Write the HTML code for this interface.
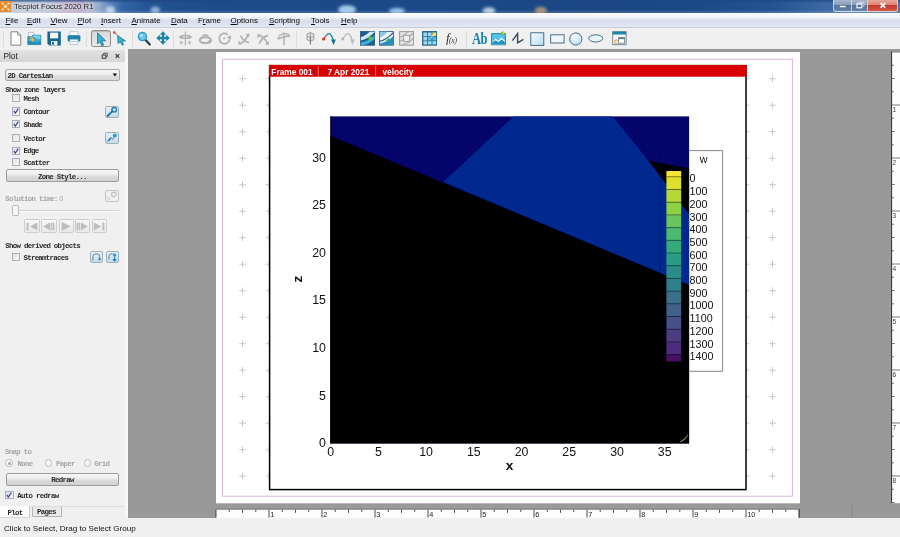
<!DOCTYPE html>
<html lang="en"><head><meta charset="utf-8"><title>Tecplot Focus 2020 R1</title>
<style>
html,body{margin:0;padding:0;}
body{width:900px;height:537px;overflow:hidden;position:relative;background:#f0f0f0;font-family:"Liberation Sans",sans-serif;}
#root{position:absolute;left:0;top:0;width:900px;height:537px;overflow:hidden;will-change:transform;}
.abs{position:absolute;}
#title{left:0;top:0;width:900px;height:13.2px;background:linear-gradient(90deg,#c3ccdc 0px,#bdc6d9 50px,#c2b4cf 68px,#bfa9c8 78px,#b3b9d3 90px,#94add0 99px,#5f87bd 109px,#3465a6 122px,#215291 150px,#1c4b89 220px,#1b4a88 420px,#1a4783 600px,#1b4a87 700px,#225291 770px,#38669f 820px,#4872a8 860px,#4872a8 900px);}
#titleshade{left:0;top:0;width:900px;height:13.2px;background:linear-gradient(180deg,rgba(30,70,130,.75) 0,rgba(30,70,130,.55) 1.2px,rgba(40,80,140,.0) 2.8px,rgba(255,255,255,0) 75%,rgba(255,255,255,.18) 100%);}
#titletxt{left:14.2px;top:0.2px;font-size:7.75px;line-height:13px;color:#1a1a1a;white-space:nowrap;text-shadow:0 0 3px rgba(255,255,255,.9),0 0 5px rgba(255,255,255,.7);}
#menu{left:0;top:13px;width:900px;height:14.5px;background:linear-gradient(180deg,#fcfcfe 0,#f2f4fa 30%,#d9dfee 50%,#dae0ee 68%,#e3e8f3 100%);border-bottom:1px solid #c9cdd9;box-sizing:border-box;}
.mi{position:absolute;top:15.4px;font-size:7.95px;line-height:11px;color:#0a0a0a;white-space:nowrap;}
.mi u{text-decoration:underline;text-underline-offset:1px;}
#toolbar{left:0;top:27.5px;width:900px;height:21.5px;background:#f0f0f0;}
#left{left:0;top:49px;width:125px;height:469px;background:#f0f0f0;}
#work{left:127.6px;top:49px;width:772.4px;height:469px;background:#999999;}
#status{left:0;top:518px;width:900px;height:19px;background:#f0f0f0;}
#statustxt{left:4px;top:524.3px;font-size:8.1px;line-height:10px;color:#111;white-space:nowrap;}
.mono{font-family:"Liberation Mono",monospace;font-weight:bold;font-size:7.4px;letter-spacing:-0.69px;line-height:9px;color:#2a2a2a;white-space:nowrap;position:absolute;}
.dis{color:#a6a6a6;}
.cb{position:absolute;width:7px;height:7px;border:1px solid #adafb6;background:linear-gradient(135deg,#dfe1ea,#f8f8fb);box-sizing:border-box;}
.btn{position:absolute;border:1px solid #9c9c9c;border-radius:2px;background:linear-gradient(180deg,#f6f6f6 0,#ececec 48%,#dcdcdc 52%,#d2d2d2 100%);box-sizing:border-box;}
.ibtn{position:absolute;width:13px;height:13px;border:1px solid #9fb0bd;border-radius:2px;background:linear-gradient(180deg,#e6f0f7,#c6dcea);box-sizing:border-box;}
</style></head>
<body>
<div id="root">
<div id="title" class="abs"></div><div id="titleshade" class="abs"></div>
<svg class="abs" style="left:0;top:0" width="900" height="13.2" viewBox="0 0 900 13.2"><defs><filter id="bl" x="-30%" y="-60%" width="160%" height="220%"><feGaussianBlur stdDeviation="1.6"/></filter></defs><g filter="url(#bl)"><ellipse cx="110" cy="10" rx="5" ry="4" fill="#cfe0f4" opacity=".8"/><ellipse cx="155" cy="10" rx="5" ry="3.6" fill="#bcd6f2" opacity=".7"/><ellipse cx="347" cy="9.6" rx="9" ry="4.4" fill="#b4d8f6" opacity=".9"/><ellipse cx="397" cy="11" rx="8" ry="3" fill="#a8d0f6" opacity=".9"/><ellipse cx="489" cy="10.6" rx="6.5" ry="3.4" fill="#cfe2f6" opacity=".85"/><ellipse cx="541" cy="10.4" rx="6" ry="3.6" fill="#c9a27a" opacity=".8"/></g></svg>
<svg class="abs" style="left:0;top:0" width="12" height="13" viewBox="0 0 12 13"><rect x="0" y="1" width="11" height="11" fill="#e88a2e"/><circle cx="5.5" cy="6.5" r="1.6" fill="#fbe3b8"/><circle cx="2.5" cy="3.5" r="1.1" fill="#fbe3b8"/><circle cx="8.6" cy="3.5" r="1.1" fill="#fbe3b8"/><circle cx="2.5" cy="9.5" r="1.1" fill="#fbe3b8"/><circle cx="8.6" cy="9.5" r="1.1" fill="#fbe3b8"/><path d="M2.5 3.5L8.6 9.5M8.6 3.5L2.5 9.5" stroke="#fbe3b8" stroke-width=".7"/></svg>
<div id="titletxt" class="abs">Tecplot Focus 2020 R1</div>
<div class="abs" style="left:833px;top:0;width:19px;height:11.5px;border:1px solid rgba(220,230,245,.75);border-top:none;border-radius:0 0 0 3px;box-sizing:border-box;background:linear-gradient(180deg,#a6b5cb 0,#8a9dba 45%,#57739d 50%,#6582ab 100%);"></div>
<div class="abs" style="left:851px;top:0;width:17px;height:11.5px;border:1px solid rgba(220,230,245,.75);border-top:none;box-sizing:border-box;background:linear-gradient(180deg,#a6b5cb 0,#8a9dba 45%,#57739d 50%,#6582ab 100%);"></div>
<div class="abs" style="left:867px;top:0;width:31px;height:11.5px;border:1px solid rgba(235,215,215,.8);border-top:none;border-radius:0 0 3px 0;box-sizing:border-box;background:linear-gradient(180deg,#e7a79c 0,#dd8273 45%,#c4382a 50%,#d2594a 100%);"></div>
<svg class="abs" style="left:833px;top:0" width="66" height="12" viewBox="0 0 66 12"><rect x="6.5" y="5.6" width="6.5" height="1.9" fill="#fff" stroke="#48566b" stroke-width=".4"/><rect x="24" y="3.8" width="4.8" height="4" fill="none" stroke="#fff" stroke-width="1.1"/><path d="M26 3V2.2H31V6.3H29.6" fill="none" stroke="#e8eef6" stroke-width=".7"/><path d="M47.6 3.2L52.2 7.6M52.2 3.2L47.6 7.6" stroke="#fff" stroke-width="1.7"/></svg>
<div id="menu" class="abs"></div>
<div class="mi" style="left:5.5px"><u>F</u>ile</div><div class="mi" style="left:27px"><u>E</u>dit</div><div class="mi" style="left:50.5px"><u>V</u>iew</div><div class="mi" style="left:77.5px"><u>P</u>lot</div><div class="mi" style="left:101px"><u>I</u>nsert</div><div class="mi" style="left:131.5px"><u>A</u>nimate</div><div class="mi" style="left:171px"><u>D</u>ata</div><div class="mi" style="left:198px">F<u>r</u>ame</div><div class="mi" style="left:230.5px"><u>O</u>ptions</div><div class="mi" style="left:269px"><u>S</u>cripting</div><div class="mi" style="left:311px"><u>T</u>ools</div><div class="mi" style="left:341px"><u>H</u>elp</div>
<div id="toolbar" class="abs"></div>
<div class="abs" style="left:3.4px;top:30.5px;width:1px;height:16px;background:#dcdcdc"></div><div class="abs" style="left:86.0px;top:30.5px;width:1px;height:16px;background:#dcdcdc"></div><div class="abs" style="left:132.0px;top:30.5px;width:1px;height:16px;background:#dcdcdc"></div><div class="abs" style="left:173.2px;top:30.5px;width:1px;height:16px;background:#dcdcdc"></div><div class="abs" style="left:296.4px;top:30.5px;width:1px;height:16px;background:#dcdcdc"></div><div class="abs" style="left:466.4px;top:30.5px;width:1px;height:16px;background:#dcdcdc"></div>
<svg class="abs" style="left:10px;top:31px" width="12" height="15" viewBox="0 0 12 15"><path d="M1 .8H7.6L10.8 4V14.2H1Z" fill="#fdfdfd" stroke="#777" stroke-width=".9"/><path d="M7.6 .8V4H10.8" fill="#e4e4e4" stroke="#777" stroke-width=".8"/></svg>
<svg class="abs" style="left:27.4px;top:31.2px" width="15" height="15" viewBox="0 0 15 15"><path d="M1.6 1.4H6.6V7H1.6Z" fill="#f4f8fa" stroke="#8aa8b6" stroke-width=".6"/><path d="M.8 5.6H4.6L5.8 4.2H13.8V13.6H.8Z" fill="#3aa9cc" stroke="#1a7f9f" stroke-width=".7"/><path d="M6 4.6H13.4V8.4Q9 8 6 5.8Z" fill="#7fd0e6"/><path d="M.8 13.6V9.4Q7 13 13.8 10.4V13.6Z" fill="#1f8db3"/><path d="M3.4 5.2L6.4 8.6L4 8.6L6.6 10.6" fill="none" stroke="#f0b43a" stroke-width="1.3"/></svg>
<svg class="abs" style="left:47.2px;top:31.2px" width="15" height="15" viewBox="0 0 15 15"><path d="M.4 .6H13.8V14.4H2.4L.4 12.4Z" fill="#17668a"/><rect x="3" y="1.6" width="8.2" height="5.8" fill="#eef6fa"/><rect x="4" y="10" width="6.4" height="4.4" fill="#e4eef4"/><rect x="5" y="10.8" width="1.8" height="3" fill="#17668a"/></svg>
<svg class="abs" style="left:66.6px;top:31.4px" width="14" height="14" viewBox="0 0 14 14"><rect x="3" y=".8" width="8" height="4" fill="#fafafa" stroke="#8fb6c6" stroke-width=".6"/><rect x=".6" y="4.2" width="12.8" height="6.2" rx="1" fill="#1b84a8"/><rect x="3" y="8.4" width="8" height="5" fill="#f3f7f9" stroke="#8fb6c6" stroke-width=".6"/><rect x="3.8" y="10.2" width="6.4" height=".8" fill="#9fc4d2"/></svg>
<div class="abs" style="left:91.4px;top:30px;width:19.2px;height:17px;border:1px solid #8b8b8b;border-radius:2.5px;background:linear-gradient(180deg,#d9d9d9,#e9e9e9);box-sizing:border-box;box-shadow:inset 0 1px 1px rgba(0,0,0,.15)"></div>
<svg class="abs" style="left:95.5px;top:31.6px" width="11" height="15" viewBox="0 0 11 15"><path d="M1.6 .8L9.6 8.8H5.8L7.6 13L5.8 13.8L4 9.6L1.6 12Z" fill="#35b4d2" stroke="#10708f" stroke-width=".8"/></svg>
<svg class="abs" style="left:113.4px;top:31.2px" width="15" height="15" viewBox="0 0 15 15"><path d="M4.6 4.4L12.6 10H9L10.6 13.6L9 14.2L7.4 10.8L5 12.6Z" fill="#35b4d2" stroke="#10708f" stroke-width=".7"/><path d="M1 1L4.6 4.4" stroke="#555" stroke-width=".8"/><rect x=".2" y=".4" width="2.2" height="2.2" fill="#d03a2a"/></svg>
<svg class="abs" style="left:136.6px;top:31.2px" width="15" height="15" viewBox="0 0 15 15"><path d="M7.4 7.8L12.8 13.4" stroke="#30363c" stroke-width="2.2" stroke-linecap="round"/><circle cx="5.4" cy="5.6" r="4.1" fill="#6cc8ea" stroke="#2a9dc4" stroke-width="1.3"/><circle cx="4.4" cy="4.4" r="1.3" fill="#b8e6f6"/></svg>
<svg class="abs" style="left:155.6px;top:31.4px" width="14" height="14" viewBox="0 0 14 14"><path d="M7 .2L10.2 3.8H8.2V5.8H10.2V3.8L13.8 7L10.2 10.2V8.2H8.2V10.2H10.2L7 13.8L3.8 10.2H5.8V8.2H3.8V10.2L.2 7L3.8 3.8V5.8H5.8V3.8H3.8Z" fill="#1b84a8"/></svg>
<svg class="abs" style="left:178px;top:31.2px" width="15" height="15" viewBox="0 0 15 15"><path d="M7.4 .6V14.4" stroke="#b3b3b3" stroke-width="1.2"/><path d="M2.6 6.2Q7.4 2.2 12.2 6.2Q7.4 8.4 2.6 6.2Z" fill="none" stroke="#b3b3b3" stroke-width="1.5"/><path d="M.6 6L4 3.4L4 8.2ZM14.2 6L10.8 3.6L10.8 8.4Z" fill="#b3b3b3"/><path d="M2 13.4L2.6 9.6L5.4 12ZM12.8 13.4L12.2 9.6L9.4 12Z" fill="#b3b3b3"/></svg>
<svg class="abs" style="left:197.6px;top:31.6px" width="15" height="14" viewBox="0 0 15 14"><ellipse cx="7.4" cy="8.2" rx="5.6" ry="2.9" fill="none" stroke="#b3b3b3" stroke-width="2.1"/><path d="M4.4 4.6Q7.4 1.2 10.4 4.6" fill="none" stroke="#b3b3b3" stroke-width="1.6"/><path d="M9 10L13.2 11.8L11.8 7.6Z" fill="#b3b3b3"/><path d="M1.2 6.2L3.8 4.2L4.4 7.6Z" fill="#b3b3b3"/></svg>
<svg class="abs" style="left:217.4px;top:31.2px" width="15" height="15" viewBox="0 0 15 15"><path d="M10.8 3.6A5.2 5.2 0 1 0 12.6 8.4" fill="none" stroke="#b3b3b3" stroke-width="1.8"/><path d="M9.6 6.6L14 8.6L14 4Z" fill="#b3b3b3"/><circle cx="7.2" cy="7.6" r="1" fill="#b3b3b3"/></svg>
<svg class="abs" style="left:236.6px;top:31.6px" width="15" height="14" viewBox="0 0 15 14"><path d="M3 12Q9 9 11 2.6M3.4 3.6Q6.4 9.4 12 10.6" stroke="#b3b3b3" stroke-width="1.7" fill="none"/><path d="M8.6 2.2L12.6 1.4L12.2 5.4ZM1.2 8.6L1.4 12.8L5.2 12Z" fill="#b3b3b3"/></svg>
<svg class="abs" style="left:256px;top:31.6px" width="15" height="14" viewBox="0 0 15 14"><path d="M2.6 3Q8.4 5 11.6 11.6M12 3.4Q6 5.4 3.2 11.6" stroke="#b3b3b3" stroke-width="1.7" fill="none"/><path d="M1.4 6.4L1.2 2.2L5.4 2.4ZM9 12.6L13 13L12.8 8.8Z" fill="#b3b3b3"/></svg>
<svg class="abs" style="left:275.6px;top:31.6px" width="15" height="14" viewBox="0 0 15 14"><path d="M8 1.4V13.2" stroke="#b3b3b3" stroke-width="1.5" fill="none"/><path d="M1.8 6.8L13.4 3.6" stroke="#b3b3b3" stroke-width="1.7"/><path d="M2.6 4L8 1.2L12.8 2.6L13.4 5.4" fill="none" stroke="#b3b3b3" stroke-width="1.3"/><path d="M.8 5.4L4.2 4.4L3.2 8Z" fill="#b3b3b3"/></svg>
<svg class="abs" style="left:303.6px;top:31.4px" width="13" height="15" viewBox="0 0 13 15"><path d="M3 3.2L6.4 1.6L9.8 3.2V8.6L6.4 10.4L3 8.6Z" fill="#e2e2e2" stroke="#8a8a8a" stroke-width=".8"/><path d="M6.4 1.6V10.4M3 5.8H9.8" stroke="#8a8a8a" stroke-width=".6"/><path d="M6.4 6V13.6" stroke="#777" stroke-width="1"/></svg>
<svg class="abs" style="left:320.6px;top:31.4px" width="16" height="15" viewBox="0 0 16 15"><path d="M2.6 8Q4 6 5.2 4.6" fill="none" stroke="#d03a2a" stroke-width="1.2"/><path d="M5.2 4.6Q8 .6 10.4 4.6Q12 7.4 12.4 10" fill="none" stroke="#1b84a8" stroke-width="1.3"/><path d="M10 8.6L12.6 14L14.8 8.4Z" fill="#17728f"/><circle cx="2.6" cy="8" r="1.6" fill="#d03a2a"/></svg>
<svg class="abs" style="left:339.6px;top:31.4px" width="16" height="15" viewBox="0 0 16 15"><path d="M2.6 8Q4 6 5.2 4.6Q8 .6 10.4 4.6Q12 7.4 12.4 10" fill="none" stroke="#b8b8b8" stroke-width="1.3"/><path d="M10 8.6L12.6 14L14.8 8.4Z" fill="#c0c0c0"/><circle cx="2.6" cy="8" r="1.5" fill="#b2b2b2"/></svg>
<svg class="abs" style="left:359.6px;top:31.2px" width="15.4" height="15" viewBox="0 0 15.4 15"><rect x=".6" y=".6" width="14" height="13.6" fill="#1d5f8f" stroke="#23506e" stroke-width=".8"/><path d="M.8 9.6Q6.6 8.4 14.4 1.4V.8H9.6Q5 5.4 .8 6Z" fill="#cfeaf6"/><path d="M.8 14V11.4Q8 10.6 14.4 4.4V8Q9.6 13 4 14Z" fill="#3bb0da"/><path d="M10 4.6L12.8 7.4H11.2V9.6H8.8V7.4H7.2Z" fill="#5ec04a"/></svg>
<svg class="abs" style="left:379.2px;top:31.2px" width="15.4" height="15" viewBox="0 0 15.4 15"><rect x=".6" y=".6" width="14" height="13.6" fill="#eef7fb" stroke="#23506e" stroke-width=".8"/><path d="M.8 10.4Q7 9 14.4 1.6" fill="none" stroke="#1d5f8f" stroke-width="1.3"/><path d="M.8 14V12.4Q8.4 11 14.4 5V14Z" fill="#2a8fc0"/><path d="M.8 6.4Q4.6 5.6 8.6 .8H.8Z" fill="#8cc6e0"/><path d="M6.6 9.6L10.4 8.2M9 7.4L10.6 8.2L9.6 9.8" stroke="#4aa83a" stroke-width=".9" fill="none"/></svg>
<svg class="abs" style="left:398.6px;top:31.2px" width="15.4" height="15" viewBox="0 0 15.4 15"><rect x=".6" y=".6" width="14" height="13.6" fill="#e2e2e2" stroke="#9c9c9c" stroke-width="1"/><path d="M.8 10Q7 9 14.4 2M.8 6Q4.6 5.4 8.4 .8M3.4 14Q9.6 12.4 14.4 7" fill="none" stroke="#a8a8a8" stroke-width="1.1"/><rect x="4.6" y="4.4" width="6" height="6" fill="#f0f0f0" stroke="#a4a4a4" stroke-width="1"/></svg>
<svg class="abs" style="left:421.6px;top:31.2px" width="15.6" height="15" viewBox="0 0 15.6 15"><rect x=".6" y=".6" width="14.4" height="13.6" fill="#1d6f98" stroke="#1d5878" stroke-width=".8"/><path d="M1.4 1.4H5V5H1.4ZM5.8 1.4H9.6V5H5.8ZM1.4 5.8H5V9.4H1.4ZM1.4 10.2H5V13.4H1.4ZM5.8 10.2H9.6V13.4H5.8ZM10.4 10.2H14.2V13.4H10.4Z" fill="#9fd8ee"/><path d="M5.8 5.8H9.6V9.4H5.8ZM10.4 5.8H14.2V9.4H10.4Z" fill="#5ab6da"/><path d="M10.4 1.4H14.2V5H10.4Z" fill="#f0d24a"/><path d="M9 6.6L12.6 2.6" stroke="#fff" stroke-width="1"/></svg>
<div class="abs" style="left:446px;top:31.4px;font-family:'Liberation Serif',serif;font-style:italic;font-size:13px;line-height:14px;color:#333;letter-spacing:-.6px;white-space:nowrap">f<span style="font-size:7.5px;letter-spacing:-.2px;position:relative;top:0.4px">(x)</span></div>
<div class="abs" style="left:472.2px;top:30.2px;font-family:'Liberation Serif',serif;font-weight:bold;font-size:17.5px;line-height:16px;color:#1b84a8;letter-spacing:-1px;white-space:nowrap;transform:scaleX(.72);transform-origin:0 0">Ab</div>
<svg class="abs" style="left:491.2px;top:31.4px" width="15.6" height="14.6" viewBox="0 0 15.6 14.6"><rect x=".6" y="2.6" width="13.8" height="11.2" fill="#56c0e6" stroke="#1b84a8" stroke-width=".9"/><path d="M1.2 11L4.6 7.6L7.2 9.8L10.4 6.6L13.8 9.6V13.2H1.2Z" fill="#e8f6fb"/><path d="M1.2 13.2V11.6L4.6 9.2L7.4 11.2L10.6 8.4L13.8 11V13.2Z" fill="#1f93bd"/><circle cx="11.6" cy="2.6" r="2" fill="#6cc04a"/><circle cx="12.4" cy="1.8" r="1" fill="#e8d04a"/></svg>
<svg class="abs" style="left:511px;top:32.4px" width="14" height="13" viewBox="0 0 14 13"><path d="M1.4 8.6L6.6 1.6V10.8L12.4 7.4" fill="none" stroke="#34485c" stroke-width="1.4"/></svg>
<svg class="abs" style="left:529.8px;top:31.6px" width="15" height="14.4" viewBox="0 0 15 14.4"><defs><linearGradient id="gsq" x1="0" y1="0" x2="1" y2="1"><stop offset="0" stop-color="#fdfeff"/><stop offset="1" stop-color="#b4dcf2"/></linearGradient></defs><rect x=".8" y=".8" width="13" height="12.6" fill="url(#gsq)" stroke="#35617f" stroke-width=".9"/></svg>
<svg class="abs" style="left:549.8px;top:33.6px" width="15" height="10" viewBox="0 0 15 10"><rect x=".7" y=".8" width="13.4" height="8.2" fill="#f0f8fd" stroke="#35617f" stroke-width=".9"/></svg>
<svg class="abs" style="left:569.2px;top:31.8px" width="14" height="14" viewBox="0 0 14 14"><defs><radialGradient id="gci" cx=".4" cy=".35" r=".7"><stop offset="0" stop-color="#fdfeff"/><stop offset="1" stop-color="#b9def2"/></radialGradient></defs><circle cx="6.8" cy="7" r="6.1" fill="url(#gci)" stroke="#35617f" stroke-width=".9"/></svg>
<svg class="abs" style="left:587.8px;top:34.4px" width="16" height="9" viewBox="0 0 16 9"><ellipse cx="7.7" cy="4.4" rx="7" ry="3.6" fill="#e6f3fa" stroke="#35617f" stroke-width=".9"/></svg>
<svg class="abs" style="left:611.8px;top:31.4px" width="15" height="15" viewBox="0 0 15 15"><rect x=".7" y=".7" width="13.4" height="13" fill="#f4f7f9" stroke="#6a7d8a" stroke-width=".9"/><rect x=".7" y=".7" width="13.4" height="2.8" fill="#1b84a8"/><rect x="6.6" y="6.6" width="6" height="5.6" fill="#fff" stroke="#6a7d8a" stroke-width=".8"/><rect x="6.6" y="6.6" width="6" height="1.6" fill="#6a7d8a"/><circle cx="4.4" cy="10.8" r="1.9" fill="none" stroke="#d0a030" stroke-width="1"/></svg>

<div id="left" class="abs"></div>
<div class="abs" style="left:124.5px;top:49px;width:3.2px;height:469px;background:#f7f7f7"></div>
<div class="abs" style="left:0;top:49.8px;width:124.5px;height:12.2px;background:linear-gradient(180deg,#e4e4e4,#dadada 50%,#d7d7d7);"></div>
<div class="abs" style="left:3.4px;top:51px;font-size:8.3px;line-height:10px;color:#222;">Plot</div>
<svg class="abs" style="left:100px;top:51px" width="24" height="10" viewBox="0 0 24 10"><rect x="2.2" y="4" width="3.6" height="3.3" fill="none" stroke="#333" stroke-width=".9"/><path d="M3.6 3.4V2.2H7.2V5.6H6.2" fill="none" stroke="#333" stroke-width=".8"/><path d="M15.6 3.2L19.2 6.8M19.2 3.2L15.6 6.8" stroke="#333" stroke-width="1.1"/></svg>
<div class="btn" style="left:5.2px;top:69px;width:114.4px;height:11.8px;border-color:#a8a8a8;border-radius:2px;background:linear-gradient(180deg,#f5f5f5 0,#ececec 50%,#e0e0e0 52%,#d6d6d6 100%)"></div>
<div class="mono " style="left:7.6px;top:72.1px">2D Cartesian</div><svg class="abs" style="left:111.6px;top:73.2px" width="6" height="4" viewBox="0 0 6 4"><path d="M0.6 .5H5.2L2.9 3.4Z" fill="#111"/></svg>
<div class="mono " style="left:5.2px;top:85.5px">Show zone layers</div><div class="cb" style="left:12.3px;top:94.30000000000001px;width:8.2px;height:8.2px"></div><div class="mono " style="left:23.4px;top:95.1px">Mesh</div>
<div class="cb" style="left:12.3px;top:107.4px;width:8.2px;height:8.2px"></div><svg class="abs" style="left:12.3px;top:107.4px" width="8" height="8" viewBox="0 0 8 8"><path d="M1.8 3.9L3.3 6.1L6.3 1.6" fill="none" stroke="#3a4a8a" stroke-width="1.15"/></svg><div class="mono " style="left:23.4px;top:108.2px">Contour</div>
<div class="cb" style="left:12.3px;top:120.30000000000001px;width:8.2px;height:8.2px"></div><svg class="abs" style="left:12.3px;top:120.30000000000001px" width="8" height="8" viewBox="0 0 8 8"><path d="M1.8 3.9L3.3 6.1L6.3 1.6" fill="none" stroke="#3a4a8a" stroke-width="1.15"/></svg><div class="mono " style="left:23.4px;top:121.1px">Shade</div>
<div class="cb" style="left:12.3px;top:133.9px;width:8.2px;height:8.2px"></div><div class="mono " style="left:23.4px;top:134.7px">Vector</div>
<div class="cb" style="left:12.3px;top:146.5px;width:8.2px;height:8.2px"></div><svg class="abs" style="left:12.3px;top:146.5px" width="8" height="8" viewBox="0 0 8 8"><path d="M1.8 3.9L3.3 6.1L6.3 1.6" fill="none" stroke="#3a4a8a" stroke-width="1.15"/></svg><div class="mono " style="left:23.4px;top:147.2px">Edge</div>
<div class="cb" style="left:12.3px;top:158.1px;width:8.2px;height:8.2px"></div><div class="mono " style="left:23.4px;top:158.8px">Scatter</div>
<div class="ibtn" style="left:105px;top:105.6px;width:13.8px;height:12px"></div><div class="ibtn" style="left:105px;top:131.7px;width:13.8px;height:12px"></div><svg class="abs" style="left:105px;top:105.6px" width="14" height="12" viewBox="0 0 14 12"><path d="M3 9.6L8.2 4.4" stroke="#1f7fb8" stroke-width="2"/><circle cx="9.2" cy="3.8" r="2.3" fill="none" stroke="#1f7fb8" stroke-width="1.5"/><path d="M2.2 10.4L3.6 9" stroke="#0d4f7a" stroke-width="1.6"/></svg>
<svg class="abs" style="left:105px;top:131.7px" width="14" height="12" viewBox="0 0 14 12"><path d="M2.4 9.6L6 5.2L7.6 7.6L10.6 3.2" fill="none" stroke="#6a8aa0" stroke-width="1"/><circle cx="9.8" cy="3.6" r="2" fill="#2aa0d0"/><path d="M3.2 9L5.6 6.4" stroke="#1f7fb8" stroke-width="1.6"/></svg>
<div class="btn" style="left:6px;top:169.3px;width:112.8px;height:13px"></div>
<div class="mono" style="left:6px;top:173.0px;width:112.8px;text-align:center">Zone Style...</div>
<div class="mono dis" style="left:5.2px;top:194.0px">Solution time:<span style="font-family:Liberation Sans,sans-serif;font-weight:normal;letter-spacing:0;margin-left:1.5px">0</span></div><div class="ibtn" style="left:105px;top:190.2px;width:13.8px;height:12px;border-color:#c4c4c4;background:#f2f2f2"></div><svg class="abs" style="left:105px;top:190.2px" width="14" height="12" viewBox="0 0 14 12"><circle cx="8.8" cy="4.4" r="2.2" fill="none" stroke="#c2c2c2" stroke-width="1.3"/><path d="M3 10V6M5 10V7.4" stroke="#cfcfcf" stroke-width="1"/></svg>
<div class="abs" style="left:16px;top:209.6px;width:103px;height:1.4px;background:#d2d2d2;border-bottom:1px solid #fbfbfb"></div><div class="abs" style="left:12.3px;top:205.2px;width:6.4px;height:11px;border:1px solid #b8b8b8;border-radius:1.5px;background:#f6f6f6;box-sizing:border-box"></div>
<div class="abs" style="left:24.3px;top:219.2px;width:15.4px;height:14.1px;border:1px solid #cdcdcd;border-radius:1.5px;background:linear-gradient(180deg,#f7f7f7,#e9e9e9);box-sizing:border-box"></div><div class="abs" style="left:41.2px;top:219.2px;width:15.5px;height:14.1px;border:1px solid #cdcdcd;border-radius:1.5px;background:linear-gradient(180deg,#f7f7f7,#e9e9e9);box-sizing:border-box"></div><div class="abs" style="left:58.5px;top:219.2px;width:15.0px;height:14.1px;border:1px solid #cdcdcd;border-radius:1.5px;background:linear-gradient(180deg,#f7f7f7,#e9e9e9);box-sizing:border-box"></div><div class="abs" style="left:75.0px;top:219.2px;width:15.4px;height:14.1px;border:1px solid #cdcdcd;border-radius:1.5px;background:linear-gradient(180deg,#f7f7f7,#e9e9e9);box-sizing:border-box"></div><div class="abs" style="left:91.8px;top:219.2px;width:15.7px;height:14.1px;border:1px solid #cdcdcd;border-radius:1.5px;background:linear-gradient(180deg,#f7f7f7,#e9e9e9);box-sizing:border-box"></div>
<svg class="abs" style="left:24px;top:219px" width="84" height="15" viewBox="0 0 84 15" fill="#bdbdbd"><rect x="2.6" y="3.6" width="2" height="7.6"/><path d="M13.4 3.6V11.2L6 7.4Z"/><path d="M26 3.6V11.2L19 7.4Z"/><rect x="26.8" y="3.6" width="1.6" height="7.6"/><rect x="29" y="3.6" width="1.4" height="7.6"/><path d="M37.6 2.8V12L46.6 7.4Z"/><rect x="52.6" y="3.6" width="1.4" height="7.6"/><rect x="54.6" y="3.6" width="1.6" height="7.6"/><path d="M57 3.6V11.2L64 7.4Z"/><path d="M69.8 3.6V11.2L77.2 7.4Z"/><rect x="78.4" y="3.6" width="2" height="7.6"/></svg>
<div class="mono " style="left:5.2px;top:242.0px">Show derived objects</div><div class="cb" style="left:12.3px;top:252.7px;width:8.2px;height:8.2px"></div><div class="mono " style="left:23.4px;top:253.8px">Streamtraces</div><div class="ibtn" style="left:90px;top:251.3px;width:13.2px;height:11.8px"></div><div class="ibtn" style="left:105.5px;top:251.3px;width:13.2px;height:11.8px"></div><svg class="abs" style="left:90px;top:251.3px" width="14" height="12" viewBox="0 0 14 12"><path d="M3 9.6V5.2Q3 3 5.4 3H7.6Q9.6 3 9.6 5.4V9" fill="none" stroke="#6f7f8f" stroke-width="1"/><path d="M7.8 7.4L9.6 9.8L11.4 7.4Z" fill="#1f7fb8"/></svg><svg class="abs" style="left:105.5px;top:251.3px" width="14" height="12" viewBox="0 0 14 12"><path d="M3 8.6V4.6Q3 3 5 3H6.6" fill="none" stroke="#6f7f8f" stroke-width="1"/><circle cx="8.6" cy="4" r="1.7" fill="#2aa0d0"/><path d="M8.6 5.6V9.8M6.8 8.2L8.6 10L10.4 8.2" fill="none" stroke="#1f7fb8" stroke-width="1.1"/></svg>
<div class="mono dis" style="left:5.0px;top:447.8px">Snap to</div><div class="abs" style="left:5.3px;top:459.40000000000003px;width:7.4px;height:7.4px;border-radius:50%;border:1px solid #bdbdbd;background:#f4f4f4;box-sizing:border-box"></div><div class="abs" style="left:7.5px;top:461.6px;width:3px;height:3px;border-radius:50%;background:#a8a8a8"></div><div class="mono dis" style="left:17.5px;top:459.8px">None</div><div class="abs" style="left:45.099999999999994px;top:459.40000000000003px;width:7.4px;height:7.4px;border-radius:50%;border:1px solid #bdbdbd;background:#f4f4f4;box-sizing:border-box"></div><div class="mono dis" style="left:56.0px;top:459.8px">Paper</div><div class="abs" style="left:84.0px;top:459.40000000000003px;width:7.4px;height:7.4px;border-radius:50%;border:1px solid #bdbdbd;background:#f4f4f4;box-sizing:border-box"></div><div class="mono dis" style="left:94.3px;top:459.8px">Grid</div>
<div class="btn" style="left:6.3px;top:472.5px;width:112.5px;height:13.2px"></div>
<div class="mono" style="left:6.3px;top:476.0px;width:112.5px;text-align:center">Redraw</div>
<div class="cb" style="left:5.4px;top:490.8px;width:8.2px;height:8.2px"></div><svg class="abs" style="left:5.4px;top:490.8px" width="8" height="8" viewBox="0 0 8 8"><path d="M1.8 3.9L3.3 6.1L6.3 1.6" fill="none" stroke="#3a4a8a" stroke-width="1.15"/></svg><div class="mono " style="left:17.2px;top:491.8px">Auto redraw</div>
<div class="abs" style="left:0;top:505.6px;width:124.5px;height:1px;background:#dcdcdc"></div><div class="abs" style="left:0;top:506px;width:30.2px;height:11.6px;background:#fdfdfd;border-right:1px solid #c8c8c8;border-bottom:1px solid #d8d8d8;box-sizing:border-box"></div><div class="abs" style="left:31.6px;top:507.2px;width:30.8px;height:9.4px;background:#e9e9e9;border:1px solid #b4b4b4;border-top:none;box-sizing:border-box"></div><div class="mono " style="left:7.6px;top:508.6px">Plot</div><div class="mono " style="left:37.0px;top:508.4px">Pages</div>

<div id="work" class="abs"></div>
<svg class="abs" style="left:0;top:0" width="900" height="537" viewBox="0 0 900 537" font-family="'Liberation Sans',sans-serif">
<rect x="216" y="52" width="584" height="451.3" fill="#ffffff"/>
<rect x="222.5" y="59.2" width="570.1" height="437" fill="none" stroke="#e0b2df" stroke-width="1"/>
<path d="M239.2 78.7h6.6M242.5 75.4v6.6M239.2 105.2h6.6M242.5 101.9v6.6M239.2 131.7h6.6M242.5 128.4v6.6M239.2 158.2h6.6M242.5 154.9v6.6M239.2 184.7h6.6M242.5 181.4v6.6M239.2 211.2h6.6M242.5 207.9v6.6M239.2 237.7h6.6M242.5 234.4v6.6M239.2 264.2h6.6M242.5 260.9v6.6M239.2 290.7h6.6M242.5 287.4v6.6M239.2 317.2h6.6M242.5 313.9v6.6M239.2 343.7h6.6M242.5 340.4v6.6M239.2 370.2h6.6M242.5 366.9v6.6M239.2 396.7h6.6M242.5 393.4v6.6M239.2 423.2h6.6M242.5 419.9v6.6M239.2 449.7h6.6M242.5 446.4v6.6M239.2 476.2h6.6M242.5 472.9v6.6M265.7 78.7h6.6M269.0 75.4v6.6M265.7 105.2h6.6M269.0 101.9v6.6M265.7 131.7h6.6M269.0 128.4v6.6M265.7 158.2h6.6M269.0 154.9v6.6M265.7 184.7h6.6M269.0 181.4v6.6M265.7 211.2h6.6M269.0 207.9v6.6M265.7 237.7h6.6M269.0 234.4v6.6M265.7 264.2h6.6M269.0 260.9v6.6M265.7 290.7h6.6M269.0 287.4v6.6M265.7 317.2h6.6M269.0 313.9v6.6M265.7 343.7h6.6M269.0 340.4v6.6M265.7 370.2h6.6M269.0 366.9v6.6M265.7 396.7h6.6M269.0 393.4v6.6M265.7 423.2h6.6M269.0 419.9v6.6M265.7 449.7h6.6M269.0 446.4v6.6M265.7 476.2h6.6M269.0 472.9v6.6M292.2 78.7h6.6M295.5 75.4v6.6M292.2 105.2h6.6M295.5 101.9v6.6M292.2 131.7h6.6M295.5 128.4v6.6M292.2 158.2h6.6M295.5 154.9v6.6M292.2 184.7h6.6M295.5 181.4v6.6M292.2 211.2h6.6M295.5 207.9v6.6M292.2 237.7h6.6M295.5 234.4v6.6M292.2 264.2h6.6M295.5 260.9v6.6M292.2 290.7h6.6M295.5 287.4v6.6M292.2 317.2h6.6M295.5 313.9v6.6M292.2 343.7h6.6M295.5 340.4v6.6M292.2 370.2h6.6M295.5 366.9v6.6M292.2 396.7h6.6M295.5 393.4v6.6M292.2 423.2h6.6M295.5 419.9v6.6M292.2 449.7h6.6M295.5 446.4v6.6M292.2 476.2h6.6M295.5 472.9v6.6M318.7 78.7h6.6M322.0 75.4v6.6M318.7 105.2h6.6M322.0 101.9v6.6M318.7 131.7h6.6M322.0 128.4v6.6M318.7 158.2h6.6M322.0 154.9v6.6M318.7 184.7h6.6M322.0 181.4v6.6M318.7 211.2h6.6M322.0 207.9v6.6M318.7 237.7h6.6M322.0 234.4v6.6M318.7 264.2h6.6M322.0 260.9v6.6M318.7 290.7h6.6M322.0 287.4v6.6M318.7 317.2h6.6M322.0 313.9v6.6M318.7 343.7h6.6M322.0 340.4v6.6M318.7 370.2h6.6M322.0 366.9v6.6M318.7 396.7h6.6M322.0 393.4v6.6M318.7 423.2h6.6M322.0 419.9v6.6M318.7 449.7h6.6M322.0 446.4v6.6M318.7 476.2h6.6M322.0 472.9v6.6M345.2 78.7h6.6M348.5 75.4v6.6M345.2 105.2h6.6M348.5 101.9v6.6M345.2 131.7h6.6M348.5 128.4v6.6M345.2 158.2h6.6M348.5 154.9v6.6M345.2 184.7h6.6M348.5 181.4v6.6M345.2 211.2h6.6M348.5 207.9v6.6M345.2 237.7h6.6M348.5 234.4v6.6M345.2 264.2h6.6M348.5 260.9v6.6M345.2 290.7h6.6M348.5 287.4v6.6M345.2 317.2h6.6M348.5 313.9v6.6M345.2 343.7h6.6M348.5 340.4v6.6M345.2 370.2h6.6M348.5 366.9v6.6M345.2 396.7h6.6M348.5 393.4v6.6M345.2 423.2h6.6M348.5 419.9v6.6M345.2 449.7h6.6M348.5 446.4v6.6M345.2 476.2h6.6M348.5 472.9v6.6M371.7 78.7h6.6M375.0 75.4v6.6M371.7 105.2h6.6M375.0 101.9v6.6M371.7 131.7h6.6M375.0 128.4v6.6M371.7 158.2h6.6M375.0 154.9v6.6M371.7 184.7h6.6M375.0 181.4v6.6M371.7 211.2h6.6M375.0 207.9v6.6M371.7 237.7h6.6M375.0 234.4v6.6M371.7 264.2h6.6M375.0 260.9v6.6M371.7 290.7h6.6M375.0 287.4v6.6M371.7 317.2h6.6M375.0 313.9v6.6M371.7 343.7h6.6M375.0 340.4v6.6M371.7 370.2h6.6M375.0 366.9v6.6M371.7 396.7h6.6M375.0 393.4v6.6M371.7 423.2h6.6M375.0 419.9v6.6M371.7 449.7h6.6M375.0 446.4v6.6M371.7 476.2h6.6M375.0 472.9v6.6M398.2 78.7h6.6M401.5 75.4v6.6M398.2 105.2h6.6M401.5 101.9v6.6M398.2 131.7h6.6M401.5 128.4v6.6M398.2 158.2h6.6M401.5 154.9v6.6M398.2 184.7h6.6M401.5 181.4v6.6M398.2 211.2h6.6M401.5 207.9v6.6M398.2 237.7h6.6M401.5 234.4v6.6M398.2 264.2h6.6M401.5 260.9v6.6M398.2 290.7h6.6M401.5 287.4v6.6M398.2 317.2h6.6M401.5 313.9v6.6M398.2 343.7h6.6M401.5 340.4v6.6M398.2 370.2h6.6M401.5 366.9v6.6M398.2 396.7h6.6M401.5 393.4v6.6M398.2 423.2h6.6M401.5 419.9v6.6M398.2 449.7h6.6M401.5 446.4v6.6M398.2 476.2h6.6M401.5 472.9v6.6M424.7 78.7h6.6M428.0 75.4v6.6M424.7 105.2h6.6M428.0 101.9v6.6M424.7 131.7h6.6M428.0 128.4v6.6M424.7 158.2h6.6M428.0 154.9v6.6M424.7 184.7h6.6M428.0 181.4v6.6M424.7 211.2h6.6M428.0 207.9v6.6M424.7 237.7h6.6M428.0 234.4v6.6M424.7 264.2h6.6M428.0 260.9v6.6M424.7 290.7h6.6M428.0 287.4v6.6M424.7 317.2h6.6M428.0 313.9v6.6M424.7 343.7h6.6M428.0 340.4v6.6M424.7 370.2h6.6M428.0 366.9v6.6M424.7 396.7h6.6M428.0 393.4v6.6M424.7 423.2h6.6M428.0 419.9v6.6M424.7 449.7h6.6M428.0 446.4v6.6M424.7 476.2h6.6M428.0 472.9v6.6M451.2 78.7h6.6M454.5 75.4v6.6M451.2 105.2h6.6M454.5 101.9v6.6M451.2 131.7h6.6M454.5 128.4v6.6M451.2 158.2h6.6M454.5 154.9v6.6M451.2 184.7h6.6M454.5 181.4v6.6M451.2 211.2h6.6M454.5 207.9v6.6M451.2 237.7h6.6M454.5 234.4v6.6M451.2 264.2h6.6M454.5 260.9v6.6M451.2 290.7h6.6M454.5 287.4v6.6M451.2 317.2h6.6M454.5 313.9v6.6M451.2 343.7h6.6M454.5 340.4v6.6M451.2 370.2h6.6M454.5 366.9v6.6M451.2 396.7h6.6M454.5 393.4v6.6M451.2 423.2h6.6M454.5 419.9v6.6M451.2 449.7h6.6M454.5 446.4v6.6M451.2 476.2h6.6M454.5 472.9v6.6M477.7 78.7h6.6M481.0 75.4v6.6M477.7 105.2h6.6M481.0 101.9v6.6M477.7 131.7h6.6M481.0 128.4v6.6M477.7 158.2h6.6M481.0 154.9v6.6M477.7 184.7h6.6M481.0 181.4v6.6M477.7 211.2h6.6M481.0 207.9v6.6M477.7 237.7h6.6M481.0 234.4v6.6M477.7 264.2h6.6M481.0 260.9v6.6M477.7 290.7h6.6M481.0 287.4v6.6M477.7 317.2h6.6M481.0 313.9v6.6M477.7 343.7h6.6M481.0 340.4v6.6M477.7 370.2h6.6M481.0 366.9v6.6M477.7 396.7h6.6M481.0 393.4v6.6M477.7 423.2h6.6M481.0 419.9v6.6M477.7 449.7h6.6M481.0 446.4v6.6M477.7 476.2h6.6M481.0 472.9v6.6M504.2 78.7h6.6M507.5 75.4v6.6M504.2 105.2h6.6M507.5 101.9v6.6M504.2 131.7h6.6M507.5 128.4v6.6M504.2 158.2h6.6M507.5 154.9v6.6M504.2 184.7h6.6M507.5 181.4v6.6M504.2 211.2h6.6M507.5 207.9v6.6M504.2 237.7h6.6M507.5 234.4v6.6M504.2 264.2h6.6M507.5 260.9v6.6M504.2 290.7h6.6M507.5 287.4v6.6M504.2 317.2h6.6M507.5 313.9v6.6M504.2 343.7h6.6M507.5 340.4v6.6M504.2 370.2h6.6M507.5 366.9v6.6M504.2 396.7h6.6M507.5 393.4v6.6M504.2 423.2h6.6M507.5 419.9v6.6M504.2 449.7h6.6M507.5 446.4v6.6M504.2 476.2h6.6M507.5 472.9v6.6M530.7 78.7h6.6M534.0 75.4v6.6M530.7 105.2h6.6M534.0 101.9v6.6M530.7 131.7h6.6M534.0 128.4v6.6M530.7 158.2h6.6M534.0 154.9v6.6M530.7 184.7h6.6M534.0 181.4v6.6M530.7 211.2h6.6M534.0 207.9v6.6M530.7 237.7h6.6M534.0 234.4v6.6M530.7 264.2h6.6M534.0 260.9v6.6M530.7 290.7h6.6M534.0 287.4v6.6M530.7 317.2h6.6M534.0 313.9v6.6M530.7 343.7h6.6M534.0 340.4v6.6M530.7 370.2h6.6M534.0 366.9v6.6M530.7 396.7h6.6M534.0 393.4v6.6M530.7 423.2h6.6M534.0 419.9v6.6M530.7 449.7h6.6M534.0 446.4v6.6M530.7 476.2h6.6M534.0 472.9v6.6M557.2 78.7h6.6M560.5 75.4v6.6M557.2 105.2h6.6M560.5 101.9v6.6M557.2 131.7h6.6M560.5 128.4v6.6M557.2 158.2h6.6M560.5 154.9v6.6M557.2 184.7h6.6M560.5 181.4v6.6M557.2 211.2h6.6M560.5 207.9v6.6M557.2 237.7h6.6M560.5 234.4v6.6M557.2 264.2h6.6M560.5 260.9v6.6M557.2 290.7h6.6M560.5 287.4v6.6M557.2 317.2h6.6M560.5 313.9v6.6M557.2 343.7h6.6M560.5 340.4v6.6M557.2 370.2h6.6M560.5 366.9v6.6M557.2 396.7h6.6M560.5 393.4v6.6M557.2 423.2h6.6M560.5 419.9v6.6M557.2 449.7h6.6M560.5 446.4v6.6M557.2 476.2h6.6M560.5 472.9v6.6M583.7 78.7h6.6M587.0 75.4v6.6M583.7 105.2h6.6M587.0 101.9v6.6M583.7 131.7h6.6M587.0 128.4v6.6M583.7 158.2h6.6M587.0 154.9v6.6M583.7 184.7h6.6M587.0 181.4v6.6M583.7 211.2h6.6M587.0 207.9v6.6M583.7 237.7h6.6M587.0 234.4v6.6M583.7 264.2h6.6M587.0 260.9v6.6M583.7 290.7h6.6M587.0 287.4v6.6M583.7 317.2h6.6M587.0 313.9v6.6M583.7 343.7h6.6M587.0 340.4v6.6M583.7 370.2h6.6M587.0 366.9v6.6M583.7 396.7h6.6M587.0 393.4v6.6M583.7 423.2h6.6M587.0 419.9v6.6M583.7 449.7h6.6M587.0 446.4v6.6M583.7 476.2h6.6M587.0 472.9v6.6M610.2 78.7h6.6M613.5 75.4v6.6M610.2 105.2h6.6M613.5 101.9v6.6M610.2 131.7h6.6M613.5 128.4v6.6M610.2 158.2h6.6M613.5 154.9v6.6M610.2 184.7h6.6M613.5 181.4v6.6M610.2 211.2h6.6M613.5 207.9v6.6M610.2 237.7h6.6M613.5 234.4v6.6M610.2 264.2h6.6M613.5 260.9v6.6M610.2 290.7h6.6M613.5 287.4v6.6M610.2 317.2h6.6M613.5 313.9v6.6M610.2 343.7h6.6M613.5 340.4v6.6M610.2 370.2h6.6M613.5 366.9v6.6M610.2 396.7h6.6M613.5 393.4v6.6M610.2 423.2h6.6M613.5 419.9v6.6M610.2 449.7h6.6M613.5 446.4v6.6M610.2 476.2h6.6M613.5 472.9v6.6M636.7 78.7h6.6M640.0 75.4v6.6M636.7 105.2h6.6M640.0 101.9v6.6M636.7 131.7h6.6M640.0 128.4v6.6M636.7 158.2h6.6M640.0 154.9v6.6M636.7 184.7h6.6M640.0 181.4v6.6M636.7 211.2h6.6M640.0 207.9v6.6M636.7 237.7h6.6M640.0 234.4v6.6M636.7 264.2h6.6M640.0 260.9v6.6M636.7 290.7h6.6M640.0 287.4v6.6M636.7 317.2h6.6M640.0 313.9v6.6M636.7 343.7h6.6M640.0 340.4v6.6M636.7 370.2h6.6M640.0 366.9v6.6M636.7 396.7h6.6M640.0 393.4v6.6M636.7 423.2h6.6M640.0 419.9v6.6M636.7 449.7h6.6M640.0 446.4v6.6M636.7 476.2h6.6M640.0 472.9v6.6M663.2 78.7h6.6M666.5 75.4v6.6M663.2 105.2h6.6M666.5 101.9v6.6M663.2 131.7h6.6M666.5 128.4v6.6M663.2 158.2h6.6M666.5 154.9v6.6M663.2 184.7h6.6M666.5 181.4v6.6M663.2 211.2h6.6M666.5 207.9v6.6M663.2 237.7h6.6M666.5 234.4v6.6M663.2 264.2h6.6M666.5 260.9v6.6M663.2 290.7h6.6M666.5 287.4v6.6M663.2 317.2h6.6M666.5 313.9v6.6M663.2 343.7h6.6M666.5 340.4v6.6M663.2 370.2h6.6M666.5 366.9v6.6M663.2 396.7h6.6M666.5 393.4v6.6M663.2 423.2h6.6M666.5 419.9v6.6M663.2 449.7h6.6M666.5 446.4v6.6M663.2 476.2h6.6M666.5 472.9v6.6M689.7 78.7h6.6M693.0 75.4v6.6M689.7 105.2h6.6M693.0 101.9v6.6M689.7 131.7h6.6M693.0 128.4v6.6M689.7 158.2h6.6M693.0 154.9v6.6M689.7 184.7h6.6M693.0 181.4v6.6M689.7 211.2h6.6M693.0 207.9v6.6M689.7 237.7h6.6M693.0 234.4v6.6M689.7 264.2h6.6M693.0 260.9v6.6M689.7 290.7h6.6M693.0 287.4v6.6M689.7 317.2h6.6M693.0 313.9v6.6M689.7 343.7h6.6M693.0 340.4v6.6M689.7 370.2h6.6M693.0 366.9v6.6M689.7 396.7h6.6M693.0 393.4v6.6M689.7 423.2h6.6M693.0 419.9v6.6M689.7 449.7h6.6M693.0 446.4v6.6M689.7 476.2h6.6M693.0 472.9v6.6M716.2 78.7h6.6M719.5 75.4v6.6M716.2 105.2h6.6M719.5 101.9v6.6M716.2 131.7h6.6M719.5 128.4v6.6M716.2 158.2h6.6M719.5 154.9v6.6M716.2 184.7h6.6M719.5 181.4v6.6M716.2 211.2h6.6M719.5 207.9v6.6M716.2 237.7h6.6M719.5 234.4v6.6M716.2 264.2h6.6M719.5 260.9v6.6M716.2 290.7h6.6M719.5 287.4v6.6M716.2 317.2h6.6M719.5 313.9v6.6M716.2 343.7h6.6M719.5 340.4v6.6M716.2 370.2h6.6M719.5 366.9v6.6M716.2 396.7h6.6M719.5 393.4v6.6M716.2 423.2h6.6M719.5 419.9v6.6M716.2 449.7h6.6M719.5 446.4v6.6M716.2 476.2h6.6M719.5 472.9v6.6M742.7 78.7h6.6M746.0 75.4v6.6M742.7 105.2h6.6M746.0 101.9v6.6M742.7 131.7h6.6M746.0 128.4v6.6M742.7 158.2h6.6M746.0 154.9v6.6M742.7 184.7h6.6M746.0 181.4v6.6M742.7 211.2h6.6M746.0 207.9v6.6M742.7 237.7h6.6M746.0 234.4v6.6M742.7 264.2h6.6M746.0 260.9v6.6M742.7 290.7h6.6M746.0 287.4v6.6M742.7 317.2h6.6M746.0 313.9v6.6M742.7 343.7h6.6M746.0 340.4v6.6M742.7 370.2h6.6M746.0 366.9v6.6M742.7 396.7h6.6M746.0 393.4v6.6M742.7 423.2h6.6M746.0 419.9v6.6M742.7 449.7h6.6M746.0 446.4v6.6M742.7 476.2h6.6M746.0 472.9v6.6M769.2 78.7h6.6M772.5 75.4v6.6M769.2 105.2h6.6M772.5 101.9v6.6M769.2 131.7h6.6M772.5 128.4v6.6M769.2 158.2h6.6M772.5 154.9v6.6M769.2 184.7h6.6M772.5 181.4v6.6M769.2 211.2h6.6M772.5 207.9v6.6M769.2 237.7h6.6M772.5 234.4v6.6M769.2 264.2h6.6M772.5 260.9v6.6M769.2 290.7h6.6M772.5 287.4v6.6M769.2 317.2h6.6M772.5 313.9v6.6M769.2 343.7h6.6M772.5 340.4v6.6M769.2 370.2h6.6M772.5 366.9v6.6M769.2 396.7h6.6M772.5 393.4v6.6M769.2 423.2h6.6M772.5 419.9v6.6M769.2 449.7h6.6M772.5 446.4v6.6M769.2 476.2h6.6M772.5 472.9v6.6" stroke="#b8b8b8" stroke-width="0.75" fill="none"/>
<rect x="269.6" y="65.6" width="476.4" height="424" fill="#ffffff" stroke="#000" stroke-width="1.5"/>
<rect x="269" y="65" width="477.7" height="11.7" fill="#d90000"/>
<g fill="#fff" font-weight="bold" font-size="8.35"><text x="271.3" y="74.9">Frame 001</text><text x="327.4" y="74.9">7 Apr 2021</text><text x="382.4" y="74.9">velocity</text></g>
<path d="M318.3 66.2V76M375.6 66.2V76" stroke="#f0a0a0" stroke-width=".7"/>
<rect x="330.4" y="116.4" width="358.70000000000005" height="327.0" fill="#04046a"/>
<polygon points="513.6,116.4 612.6,116.4 648.3,160.4 689.1,214 689.1,285.2 443.2,182.0" fill="#00288f"/>
<polygon points="648.3,160.4 689.1,168.4 689.1,214" fill="#000"/>
<polygon points="330.4,135.8 689.1,284.9 689.1,443.4 330.4,443.4" fill="#000"/>
<rect x="330.4" y="116.4" width="1.3" height="327.0" fill="#000"/>
<path d="M680 441.9Q685.6 440.4 688 434.4Q686.4 438 680 441.9Z" fill="#d2d29a" stroke="#8a8a5a" stroke-width=".5"/>
<g font-size="12.35" fill="#111">
<text x="330.7" y="456.0" text-anchor="middle">0</text><text x="378.4" y="456.0" text-anchor="middle">5</text><text x="426.1" y="456.0" text-anchor="middle">10</text><text x="473.8" y="456.0" text-anchor="middle">15</text><text x="521.5" y="456.0" text-anchor="middle">20</text><text x="569.2" y="456.0" text-anchor="middle">25</text><text x="617.0" y="456.0" text-anchor="middle">30</text><text x="664.7" y="456.0" text-anchor="middle">35</text><text x="325.9" y="447.1" text-anchor="end">0</text><text x="325.9" y="399.5" text-anchor="end">5</text><text x="325.9" y="351.9" text-anchor="end">10</text><text x="325.9" y="304.3" text-anchor="end">15</text><text x="325.9" y="256.7" text-anchor="end">20</text><text x="325.9" y="209.1" text-anchor="end">25</text><text x="325.9" y="161.5" text-anchor="end">30</text></g>
<text x="509.6" y="470" font-size="13.6" font-weight="bold" text-anchor="middle" fill="#111">x</text>
<text transform="translate(302.2,279.2) rotate(-90)" font-size="13.6" font-weight="bold" text-anchor="middle" fill="#111">z</text>
<path d="M689.1 150.6H722.6V371.3H689.1" fill="none" stroke="#5e5e5e" stroke-width=".75"/>
<path d="M660.2 150.3V371" fill="none" stroke="rgba(0,0,40,.22)" stroke-width=".8"/>
<text x="703.7" y="163.2" font-size="10.7" text-anchor="middle" fill="#111">w</text>
<rect x="666.4" y="171.00" width="14.8" height="5.85" fill="#f3e436"/><rect x="666.4" y="176.80" width="14.8" height="12.75" fill="#dde02c"/><rect x="666.4" y="189.50" width="14.8" height="12.75" fill="#b5d834"/><rect x="666.4" y="202.20" width="14.8" height="12.75" fill="#8fd044"/><rect x="666.4" y="214.90" width="14.8" height="12.75" fill="#6ac55a"/><rect x="666.4" y="227.60" width="14.8" height="12.75" fill="#4bb96e"/><rect x="666.4" y="240.30" width="14.8" height="12.75" fill="#35ab7c"/><rect x="666.4" y="253.00" width="14.8" height="12.75" fill="#2a9c84"/><rect x="666.4" y="265.70" width="14.8" height="12.75" fill="#2b8d89"/><rect x="666.4" y="278.40" width="14.8" height="12.75" fill="#30808c"/><rect x="666.4" y="291.10" width="14.8" height="12.75" fill="#38708b"/><rect x="666.4" y="303.80" width="14.8" height="12.75" fill="#41608a"/><rect x="666.4" y="316.50" width="14.8" height="12.75" fill="#474f88"/><rect x="666.4" y="329.20" width="14.8" height="12.75" fill="#4a3d84"/><rect x="666.4" y="341.90" width="14.8" height="12.75" fill="#4c2c7c"/><rect x="666.4" y="354.60" width="14.8" height="6.85" fill="#480f66"/>
<path d="M666.4 176.80h14.8M666.4 189.50h14.8M666.4 202.20h14.8M666.4 214.90h14.8M666.4 227.60h14.8M666.4 240.30h14.8M666.4 253.00h14.8M666.4 265.70h14.8M666.4 278.40h14.8M666.4 291.10h14.8M666.4 303.80h14.8M666.4 316.50h14.8M666.4 329.20h14.8M666.4 341.90h14.8M666.4 354.60h14.8" stroke="rgba(0,0,0,.55)" stroke-width=".7"/>
<g font-size="10.7" fill="#111"><text x="689.6" y="182.4">0</text><text x="689.6" y="195.1">100</text><text x="689.6" y="207.8">200</text><text x="689.6" y="220.5">300</text><text x="689.6" y="233.2">400</text><text x="689.6" y="245.9">500</text><text x="689.6" y="258.6">600</text><text x="689.6" y="271.3">700</text><text x="689.6" y="284.0">800</text><text x="689.6" y="296.7">900</text><text x="689.6" y="309.4">1000</text><text x="689.6" y="322.1">1100</text><text x="689.6" y="334.8">1200</text><text x="689.6" y="347.5">1300</text><text x="689.6" y="360.2">1400</text></g>
<rect x="216" y="509.2" width="583.4" height="8.8" fill="#fdfdfd"/>
<rect x="216" y="508.6" width="583.4" height="1.1" fill="#7e7e7e"/><rect x="798.8" y="509" width=".9" height="9" fill="#555"/>
<path d="M216.00 509.6v8M229.25 509.6v2.3M242.50 509.6v3.2M255.75 509.6v2.3M269.00 509.6v8M282.25 509.6v2.3M295.50 509.6v3.2M308.75 509.6v2.3M322.00 509.6v8M335.25 509.6v2.3M348.50 509.6v3.2M361.75 509.6v2.3M375.00 509.6v8M388.25 509.6v2.3M401.50 509.6v3.2M414.75 509.6v2.3M428.00 509.6v8M441.25 509.6v2.3M454.50 509.6v3.2M467.75 509.6v2.3M481.00 509.6v8M494.25 509.6v2.3M507.50 509.6v3.2M520.75 509.6v2.3M534.00 509.6v8M547.25 509.6v2.3M560.50 509.6v3.2M573.75 509.6v2.3M587.00 509.6v8M600.25 509.6v2.3M613.50 509.6v3.2M626.75 509.6v2.3M640.00 509.6v8M653.25 509.6v2.3M666.50 509.6v3.2M679.75 509.6v2.3M693.00 509.6v8M706.25 509.6v2.3M719.50 509.6v3.2M732.75 509.6v2.3M746.00 509.6v8M759.25 509.6v2.3M772.50 509.6v3.2M785.75 509.6v2.3M799.00 509.6v8" stroke="#222" stroke-width=".8"/>
<g font-size="7.3" fill="#222"><text x="270.2" y="517.2">1</text><text x="323.2" y="517.2">2</text><text x="376.2" y="517.2">3</text><text x="429.2" y="517.2">4</text><text x="482.2" y="517.2">5</text><text x="535.2" y="517.2">6</text><text x="588.2" y="517.2">7</text><text x="641.2" y="517.2">8</text><text x="694.2" y="517.2">9</text><text x="747.2" y="517.2">10</text></g>
<rect x="891.6" y="51.6" width="8.4" height="451.6" fill="#fdfdfd"/>
<rect x="891" y="51.6" width="1.1" height="451.6" fill="#3a3a3a"/>
<path d="M891.6 52.00h8.4M891.6 65.25h2.4M891.6 78.50h3.2M891.6 91.75h2.4M891.6 105.00h8.4M891.6 118.25h2.4M891.6 131.50h3.2M891.6 144.75h2.4M891.6 158.00h8.4M891.6 171.25h2.4M891.6 184.50h3.2M891.6 197.75h2.4M891.6 211.00h8.4M891.6 224.25h2.4M891.6 237.50h3.2M891.6 250.75h2.4M891.6 264.00h8.4M891.6 277.25h2.4M891.6 290.50h3.2M891.6 303.75h2.4M891.6 317.00h8.4M891.6 330.25h2.4M891.6 343.50h3.2M891.6 356.75h2.4M891.6 370.00h8.4M891.6 383.25h2.4M891.6 396.50h3.2M891.6 409.75h2.4M891.6 423.00h8.4M891.6 436.25h2.4M891.6 449.50h3.2M891.6 462.75h2.4M891.6 476.00h8.4M891.6 489.25h2.4M891.6 502.50h3.2" stroke="#444" stroke-width=".7"/>
<g font-size="6.6" fill="#444"><text x="892.6" y="111.9">1</text><text x="892.6" y="164.9">2</text><text x="892.6" y="217.9">3</text><text x="892.6" y="270.9">4</text><text x="892.6" y="323.9">5</text><text x="892.6" y="376.9">6</text><text x="892.6" y="429.9">7</text><text x="892.6" y="482.9">8</text></g>
<path d="M851.8 504V518" stroke="#808080" stroke-width=".7"/><path d="M802.8 518V537" stroke="#e2e2e2" stroke-width=".8"/>
</svg>

<div id="status" class="abs"></div>
<div id="statustxt" class="abs">Click to Select, Drag to Select Group</div>
</div>
</body></html>
